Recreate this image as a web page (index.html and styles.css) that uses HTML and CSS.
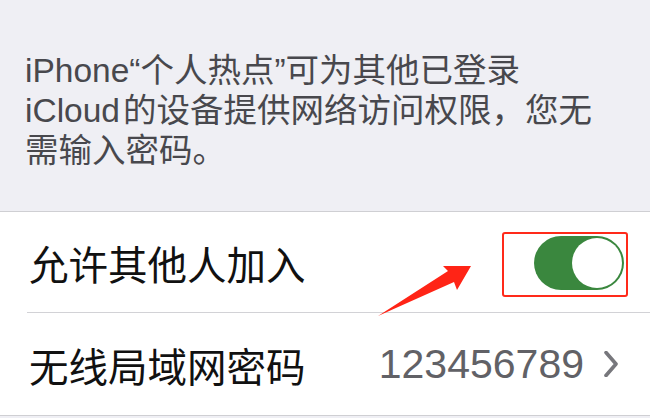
FILE: index.html
```html
<!DOCTYPE html>
<html lang="zh-CN">
<head>
<meta charset="utf-8">
<link rel="stylesheet" href="styles.css">
</head>
<body>
<div class="screen">
  <div class="footer-note">
    <p>iPhone“个人热点”可为其他已登录<br>iCloud<span class="gap"></span>的设备提供网络访问权限，您无<br>需输入密码。</p>
  </div>
  <div class="group">
    <div class="row">
      <span class="label">允许其他人加入</span>
      <div class="highlight">
        <div class="toggle"><div class="knob"></div></div>
      </div>
    </div>
    <div class="row">
      <span class="label">无线局域网密码</span>
      <div class="value">
        <span class="digits">123456789</span>
        <svg class="chev" width="14" height="26" viewBox="0 0 14 26"><polyline points="2,1.5 12,13 2,24.5" fill="none" stroke="#77777c" stroke-width="3.6" stroke-linecap="round" stroke-linejoin="round"/></svg>
      </div>
    </div>
  </div>
  <svg class="arrow" width="650" height="418" viewBox="0 0 650 418">
    <polygon points="378,316 448,271 443,266 471,266 457,290 454,282" fill="#ff2416"/>
  </svg>
</div>
</body>
</html>
```
FILE: styles.css
```css
* { box-sizing: border-box; }
html, body { margin: 0; padding: 0; }
body {
  width: 650px;
  height: 418px;
  overflow: hidden;
  background: #efeff4;
  font-family: "Liberation Sans", "Noto Sans CJK SC", sans-serif;
}
.screen {
  position: relative;
  width: 650px;
  height: 418px;
  background: #efeff4;
}
.footer-note {
  height: 212px;
  padding: 51px 0 0 25px;
  border-bottom: 1px solid #cfcfd3;
}
.footer-note p {
  margin: 0;
  font-size: 33.5px;
  line-height: 40px;
  color: #48484d;
}
.gap { display: inline-block; width: 3px; }
.group {
  background: #fff;
  border-bottom: 1px solid #cfcfd3;
}
.row {
  display: flex;
  align-items: center;
  justify-content: space-between;
  height: 101px;
  margin-left: 27px;
  padding-right: 24px;
  border-bottom: 1px solid #d2d2d6;
}
.row:last-child { border-bottom: none; height: 102px; }
.label {
  font-size: 39.5px;
  color: #111;
  padding-left: 2px;
}
.highlight {
  border: 2.5px solid #ff2a1a;
  border-radius: 3px;
  padding: 2px 2px 5px 30px;
  margin-right: -2px;
  margin-top: 4px;
}
.toggle {
  width: 90px;
  height: 54px;
  border-radius: 27px;
  background: #3a873e;
  display: flex;
  justify-content: flex-end;
  padding: 2px;
}
.knob {
  width: 50px;
  height: 50px;
  border-radius: 50%;
  background: #fff;
}
.value {
  display: flex;
  align-items: center;
  gap: 20px;
  padding-right: 8px;
}
.digits {
  font-size: 41px;
  color: #616166;
}
.chev { display: block; }
.arrow {
  position: absolute;
  left: 0;
  top: 0;
  pointer-events: none;
}
```
